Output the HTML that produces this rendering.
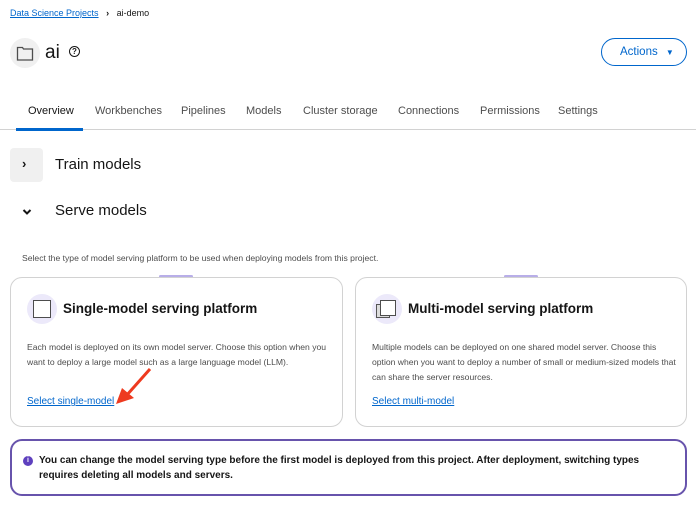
<!DOCTYPE html><html><head><style>
*{margin:0;padding:0;box-sizing:border-box}
body{width:696px;height:506px;background:#fff;font-family:"Liberation Sans",sans-serif;color:#151515;position:relative;overflow:hidden}
.a{position:absolute}
.link{color:#0066cc;text-decoration:underline}
.tab{position:absolute;top:105px;font-size:11px;color:#4d4d4d}
.card{position:absolute;top:277px;height:150px;border:1px solid #d2d2d2;border-radius:12px}
.ct{position:absolute;top:23px;left:52px;font-size:13.5px;font-weight:bold}
.cb{position:absolute;top:62px;left:16px;font-size:8.6px;line-height:15px;color:#4d4d4d;width:300px}
.ic{position:absolute;left:16px;top:16px;width:30px;height:30px;border-radius:50%;background:#ece9fa}
.tabbar{position:absolute;top:275px;width:34px;height:3px;background:#b8aee8;border-radius:2px}
</style></head><body>
<div class="a" style="left:10px;top:8px;font-size:9px"><span class="link">Data Science Projects</span> <span style="margin:0 5px;font-weight:bold;font-size:9px">›</span> ai-demo</div>
<div class="a" style="left:10px;top:38px;width:30px;height:30px;border-radius:50%;background:#f0f0f0"></div>
<svg class="a" style="left:16px;top:44px" width="18" height="18" viewBox="0 0 18 18"><path d="M1.5 3.5h5l1 1.5h9v11h-15z" fill="none" stroke="#4d4d4d" stroke-width="1.3"/></svg>
<div class="a" style="left:45px;top:42px;font-size:19px">ai</div>
<div class="a" style="left:69px;top:46px;width:11px;height:11px;border:1.3px solid #151515;border-radius:50%;font-size:8px;text-align:center;line-height:9px;font-weight:bold">?</div>
<div class="a" style="left:601px;top:38px;width:86px;height:28px;border:1px solid #0066cc;border-radius:14px;color:#0066cc;font-size:11.5px;line-height:26px;padding-left:18px">Actions <span style="font-size:8px;margin-left:5px">▼</span></div>
<div class="tab" style="left:28px;color:#151515">Overview</div>
<div class="tab" style="left:95px">Workbenches</div>
<div class="tab" style="left:181px">Pipelines</div>
<div class="tab" style="left:246px">Models</div>
<div class="tab" style="left:303px">Cluster storage</div>
<div class="tab" style="left:398px">Connections</div>
<div class="tab" style="left:480px">Permissions</div>
<div class="tab" style="left:558px">Settings</div>
<div class="a" style="left:0;top:129px;width:696px;height:1px;background:#d2d2d2"></div>
<div class="a" style="left:16px;top:128px;width:67px;height:3px;background:#0066cc"></div>
<div class="a" style="left:10px;top:148px;width:33px;height:34px;border-radius:4px;background:#f0f0f0"></div>
<div class="a" style="left:22px;top:156px;font-size:13px;font-weight:bold">›</div>
<div class="a" style="left:55px;top:156px;font-size:15px">Train models</div>
<svg class="a" style="left:22px;top:208px" width="10" height="8"><path d="M1.5 2l3.5 3.5 3.5-3.5" fill="none" stroke="#151515" stroke-width="2"/></svg>
<div class="a" style="left:55px;top:202px;font-size:15px">Serve models</div>
<div class="a" style="left:22px;top:253px;font-size:8.6px;color:#4d4d4d">Select the type of model serving platform to be used when deploying models from this project.</div>
<div class="tabbar" style="left:159px"></div><div class="tabbar" style="left:504px"></div>
<div class="card" style="left:10px;width:333px">
<div class="ic"></div><div class="a" style="left:22px;top:22px;width:18px;height:18px;border:1.3px solid #4d4d4d;background:#fff"></div>
<div class="ct">Single-model serving platform</div>
<div class="cb">Each model is deployed on its own model server. Choose this option when you want to deploy a large model such as a large language model (LLM).</div>
<div class="a link" style="left:16px;top:118px;font-size:10px">Select single-model</div>
</div>
<div class="card" style="left:355px;width:332px">
<div class="ic"></div><div class="a" style="left:20px;top:26px;width:14px;height:14px;border:1px solid #555;background:#ddd"></div><div class="a" style="left:24px;top:22px;width:16px;height:16px;border:1.3px solid #4d4d4d;background:#fff"></div>
<div class="ct">Multi-model serving platform</div>
<div class="cb" style="width:310px">Multiple models can be deployed on one shared model server. Choose this option when you want to deploy a number of small or medium-sized models that can share the server resources.</div>
<div class="a link" style="left:16px;top:118px;font-size:10px">Select multi-model</div>
</div>
<svg class="a" style="left:112px;top:366px" width="42" height="42"><path d="M38 3L14 30" stroke="#ee3a1f" stroke-width="3"/><path d="M4 38l6-16 12 10z" fill="#ee3a1f"/></svg>
<div class="a" style="left:10px;top:439px;width:677px;height:57px;border:2px solid #6753ac;border-radius:12px"></div>
<div class="a" style="left:23px;top:456px;width:10px;height:10px;border-radius:50%;background:#5e40be;color:#fff;font-size:7px;text-align:center;line-height:10px;font-weight:bold">i</div>
<div class="a" style="left:39px;top:453px;font-size:10px;font-weight:bold;line-height:15px;width:640px">You can change the model serving type before the first model is deployed from this project. After deployment, switching types requires deleting all models and servers.</div>
</body></html>
